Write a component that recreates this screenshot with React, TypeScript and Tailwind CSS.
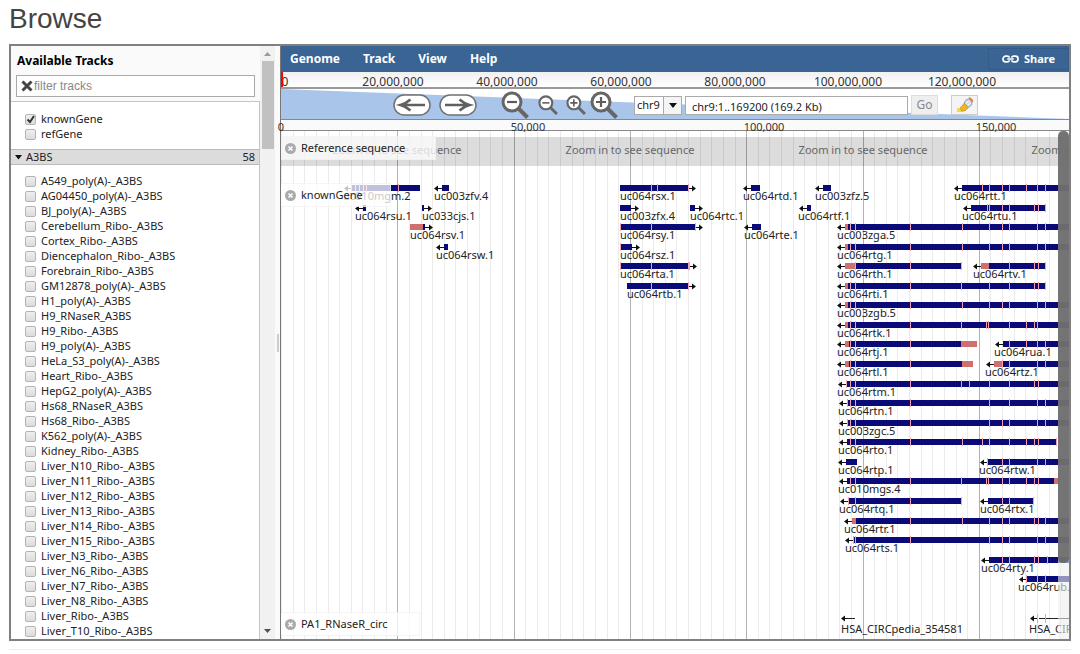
import React, { useState } from "react";

const tracks = [
  "A549_poly(A)-_A3BS", "AG04450_poly(A)-_A3BS", "BJ_poly(A)-_A3BS", "Cerebellum_Ribo-_A3BS",
  "Cortex_Ribo-_A3BS", "Diencephalon_Ribo-_A3BS", "Forebrain_Ribo-_A3BS", "GM12878_poly(A)-_A3BS",
  "H1_poly(A)-_A3BS", "H9_RNaseR_A3BS", "H9_Ribo-_A3BS", "H9_poly(A)-_A3BS", "HeLa_S3_poly(A)-_A3BS",
  "Heart_Ribo-_A3BS", "HepG2_poly(A)-_A3BS", "Hs68_RNaseR_A3BS", "Hs68_Ribo-_A3BS", "K562_poly(A)-_A3BS",
  "Kidney_Ribo-_A3BS", "Liver_N10_Ribo-_A3BS", "Liver_N11_Ribo-_A3BS", "Liver_N12_Ribo-_A3BS",
  "Liver_N13_Ribo-_A3BS", "Liver_N14_Ribo-_A3BS", "Liver_N15_Ribo-_A3BS", "Liver_N3_Ribo-_A3BS",
  "Liver_N6_Ribo-_A3BS", "Liver_N7_Ribo-_A3BS", "Liver_N8_Ribo-_A3BS", "Liver_Ribo-_A3BS",
  "Liver_T10_Ribo-_A3BS", "Liver_T11_Ribo-_A3BS",
];

type Gene = {
  row: number;
  name: string;
  x: number;
  from: number;
  to: number;
  dir: "l" | "r";
  marks?: number[];
  utr?: [number, number][];
};

// Horizontal positions are pixels from the left edge of the track view.
const genes: Gene[] = [
  { row: 0, name: "uc010mgm.2", x: 61, from: 70, to: 138, dir: "l", marks: [69, 73, 77, 81, 84, 116] },
  { row: 0, name: "uc003zfv.4", x: 152, from: 160, to: 167, dir: "l" },
  { row: 1, name: "uc064rsu.1", x: 73, from: 81, to: 84, dir: "l" },
  { row: 1, name: "uc033cjs.1", x: 140, from: 140, to: 142, dir: "r" },
  { row: 2, name: "uc064rsv.1", x: 128, from: 128, to: 143, dir: "r", utr: [[128, 141]] },
  { row: 3, name: "uc064rsw.1", x: 154, from: 162, to: 166, dir: "l" },
  { row: 0, name: "uc064rsx.1", x: 338, from: 338, to: 406, dir: "r", marks: [369, 375, 406] },
  { row: 1, name: "uc003zfx.4", x: 338, from: 338, to: 349, dir: "r" },
  { row: 1, name: "uc064rtc.1", x: 408, from: 408, to: 413, dir: "r" },
  { row: 2, name: "uc064rsy.1", x: 338, from: 338, to: 413, dir: "r", marks: [338, 369, 413] },
  { row: 3, name: "uc064rsz.1", x: 338, from: 338, to: 350, dir: "r", marks: [338] },
  { row: 4, name: "uc064rta.1", x: 338, from: 339, to: 407, dir: "r", marks: [338, 369, 406, 407] },
  { row: 5, name: "uc064rtb.1", x: 345, from: 345, to: 406, dir: "r", marks: [369, 406] },
  { row: 0, name: "uc064rtd.1", x: 461, from: 469, to: 478, dir: "l" },
  { row: 2, name: "uc064rte.1", x: 462, from: 470, to: 479, dir: "l" },
  { row: 0, name: "uc003zfz.5", x: 533, from: 541, to: 549, dir: "l" },
  { row: 1, name: "uc064rtf.1", x: 516, from: 525, to: 529, dir: "l" },
  { row: 0, name: "uc064rtt.1", x: 672, from: 680, to: 788, dir: "l", marks: [700, 707, 720, 727, 744, 755, 763] },
  { row: 1, name: "uc064rtu.1", x: 680, from: 689, to: 763, dir: "l", marks: [705, 707, 720, 727, 752, 756, 763] },
  { row: 2, name: "uc003zga.5", x: 555, from: 563, to: 788, dir: "l", marks: [568, 573, 628, 680, 707, 720, 727, 755, 763], utr: [[563, 566]] },
  { row: 3, name: "uc064rtg.1", x: 555, from: 563, to: 788, dir: "l", marks: [568, 573, 628, 680, 707, 720, 727, 755, 763], utr: [[563, 566]] },
  { row: 4, name: "uc064rth.1", x: 555, from: 563, to: 679, dir: "l", marks: [573, 628, 679], utr: [[563, 574]] },
  { row: 4, name: "uc064rtv.1", x: 691, from: 699, to: 763, dir: "l", marks: [727, 752, 756, 763], utr: [[699, 707]] },
  { row: 5, name: "uc064rti.1", x: 555, from: 563, to: 763, dir: "l", marks: [568, 573, 628, 679, 707, 727, 752, 756, 763], utr: [[563, 566]] },
  { row: 6, name: "uc003zgb.5", x: 555, from: 563, to: 788, dir: "l", marks: [568, 573, 628, 680, 707, 720, 727, 755, 763], utr: [[563, 566]] },
  { row: 7, name: "uc064rtk.1", x: 555, from: 563, to: 788, dir: "l", marks: [568, 573, 628, 679, 704, 706, 727, 744, 752, 755], utr: [[563, 566]] },
  { row: 8, name: "uc064rtj.1", x: 555, from: 563, to: 695, dir: "l", marks: [568, 573, 628], utr: [[563, 567], [679, 695]] },
  { row: 8, name: "uc064rua.1", x: 712, from: 721, to: 788, dir: "l", marks: [727, 744, 755, 763] },
  { row: 9, name: "uc064rtl.1", x: 555, from: 563, to: 691, dir: "l", marks: [568, 573, 628], utr: [[563, 567], [680, 691]] },
  { row: 9, name: "uc064rtz.1", x: 703, from: 712, to: 788, dir: "l", marks: [720, 727, 755, 763], utr: [[712, 720]] },
  { row: 10, name: "uc064rtm.1", x: 555, from: 564, to: 788, dir: "l", marks: [564, 568, 573, 628, 679, 687, 707, 727, 752, 756] },
  { row: 11, name: "uc064rtn.1", x: 556, from: 565, to: 788, dir: "l", marks: [565, 568, 573, 628, 707, 727, 755, 763] },
  { row: 12, name: "uc003zgc.5", x: 556, from: 565, to: 788, dir: "l", marks: [565, 568, 573, 628, 707, 720, 727, 755, 763] },
  { row: 13, name: "uc064rto.1", x: 556, from: 565, to: 774, dir: "l", marks: [568, 573, 628, 680, 700, 707, 727, 744, 752, 756, 774] },
  { row: 14, name: "uc064rtp.1", x: 556, from: 564, to: 575, dir: "l" },
  { row: 14, name: "uc064rtw.1", x: 697, from: 706, to: 788, dir: "l", marks: [705, 720, 727, 755, 763] },
  { row: 15, name: "uc010mgs.4", x: 556, from: 565, to: 777, dir: "l", marks: [568, 573, 628, 679, 704, 706, 720, 727, 744, 752, 756], utr: [[772, 777]] },
  { row: 16, name: "uc064rtq.1", x: 557, from: 566, to: 679, dir: "l", marks: [566, 573, 628, 679] },
  { row: 16, name: "uc064rtx.1", x: 698, from: 706, to: 751, dir: "l", marks: [720, 727, 751] },
  { row: 17, name: "uc064rtr.1", x: 562, from: 570, to: 788, dir: "l", marks: [628, 680, 707, 720, 727, 752, 756, 763], utr: [[570, 574]] },
  { row: 18, name: "uc064rts.1", x: 563, from: 571, to: 788, dir: "l", marks: [571, 573, 628, 707, 720, 727, 755, 763] },
  { row: 19, name: "uc064rty.1", x: 699, from: 707, to: 788, dir: "l", marks: [720, 727, 752, 756, 765] },
  { row: 20, name: "uc064rub.1", x: 736, from: 745, to: 788, dir: "l", marks: [744, 755, 763] },
];

function Arrow({ x, y, dir }: { x: number; y: number; dir: "l" | "r" }) {
  const s = dir === "l" ? -1 : 1;
  return (
    <g>
      <path d={`M${x} ${y}h${7 * s}`} stroke="#111" strokeWidth="1" />
      <path d={`M${x + 8 * s} ${y}l${-4 * s} -3v6z`} fill="#111" />
    </g>
  );
}

function GeneGlyph({ g }: { g: Gene }) {
  const y = Math.round(g.row * 19.56) + 53;
  return (
    <g>
      <Arrow x={g.dir === "l" ? g.from : g.to} y={y + 3.5} dir={g.dir} />
      <rect x={g.from} y={y} width={g.to - g.from} height="6" fill="#0a0a78" />
      {g.utr?.map(([a, b]) => (
        <rect key={a} x={a} y={y} width={b - a} height="6" fill="#cf6f70" />
      ))}
      {g.marks?.map((m) => (
        <rect key={m} x={m} y={y - 1} width="1" height="8" fill="#f3a0b0" />
      ))}
      <text x={g.x} y={y + 15} className="text-[11px]" fill="#222">{g.name}</text>
    </g>
  );
}

function TrackCanvas() {
  const lines = Array.from({ length: 68 }, (_, i) => i);
  return (
    <svg className="block h-full w-full" role="img" aria-label="Gene tracks">
      <rect x="0" y="6" width="100%" height="29" fill="#dcdcdc" />
      <g fill="#000">
        {lines.map((i) => (
          <rect key={i} x={Math.round(i * 11.63)} y="0" width="1" height="100%" fillOpacity={i % 10 === 0 && i ? 0.3 : 0.08} />
        ))}
      </g>
      <g transform="translate(1 1)">
        {[115, 348, 581, 814].map((x) => (
          <text key={x} x={x} y="22" textAnchor="middle" className="text-[11px]" fill="#666">Zoom in to see sequence</text>
        ))}
        {genes.map((g) => <GeneGlyph key={g.name} g={g} />)}
        <Arrow x={567} y={486.5} dir="l" />
        <path d="M566 486.500h7M757 486.500h30" stroke="#222" />
        <Arrow x={756} y={486.5} dir="l" />
        <path d="M755.500 482v9M763.500 482v9" stroke="#f3a0b0" />
        <text x="559" y="501" className="text-[11px]" fill="#222">HSA_CIRCpedia_354581</text>
        <text x="747" y="501" className="text-[11px]" fill="#222">HSA_CIRCpedia_354582</text>
      </g>
    </svg>
  );
}

function Lens({ size, plus }: { size: number; plus?: boolean }) {
  return (
    <svg width={size} height={size} viewBox="0 0 28 28" aria-hidden="true">
      <path d="M17 17l9.500 9.500" stroke="#666" strokeWidth="4" />
      <circle cx="11" cy="11" r="9" fill="#fff" stroke="#666" strokeWidth="3" />
      <path d={plus ? "M6 11h10M11 6v10" : "M6 11h10"} stroke="#5c5c5c" strokeWidth="2.200" />
    </svg>
  );
}

function PanIcon({ right }: { right?: boolean }) {
  return (
    <svg width="38" height="22" viewBox="0 0 38 22" aria-hidden="true">
      <rect x="1" y="1" width="36" height="20" rx="10" fill="#fff" stroke="#707070" strokeWidth="1.500" />
      <path d={right ? "M6 11h24M20.500 5.500q4.500 4 10 5.500-5.500 1.500-10 5.500" : "M32 11H8M17.500 5.500q-4.500 4-10 5.500 5.500 1.500 10 5.500"} fill="none" stroke="#606060" strokeWidth="2.600" />
    </svg>
  );
}

function TrackLabel({ children, className }: { children: string; className: string }) {
  return (
    <div className={`absolute left-0 flex h-6 items-center gap-[5px] border-y border-r border-[#eee]/60 bg-white/75 pl-1 text-[11px] text-[#222] ${className}`}>
      <button aria-label={`Remove ${children}`}>
        <svg width="11" height="11" viewBox="0 0 11 11" className="block">
          <circle cx="5.500" cy="5.500" r="5.500" fill="#aaa" />
          <path d="M3.500 3.500l4 4M7.500 3.500l-4 4" stroke="#fff" strokeWidth="1.500" />
        </svg>
      </button>
      <span>{children}</span>
    </div>
  );
}

function TrackCheck({ name, initial }: { name: string; initial?: boolean }) {
  const [on, setOn] = useState(!!initial);
  return (
    <label className="relative flex h-[15px] items-center gap-[5px] pl-[14px]">
      <input
        type="checkbox"
        checked={on}
        onChange={() => setOn(!on)}
        className="peer h-[11px] w-[11px] appearance-none rounded-[2px] border border-[#b4b4b4] bg-linear-to-b from-[#efefef] to-[#dcdcdc]"
      />
      <svg className="pointer-events-none absolute hidden h-[11px] w-[11px] peer-checked:block" viewBox="0 0 11 11" aria-hidden="true">
        <path d="M2.500 5.500l2.500 2.500 4-6" fill="none" stroke="#333" strokeWidth="2" />
      </svg>
      <span>{name}</span>
    </label>
  );
}

function Selector() {
  return (
    <aside className="flex w-[264px] shrink-0 bg-[#fafafa]">
      <div className="flex min-w-0 flex-1 flex-col">
        <h2 className="px-[6px] pt-[6px] text-[12px] leading-[18px] font-bold text-black">Available Tracks</h2>
        <div className="mx-[5px] mt-[5px] mb-[4px] flex h-[22px] items-center border border-[#aaa] bg-white pl-[4px]">
          <svg width="12" height="12" viewBox="0 0 12 12" aria-hidden="true"><path d="M1.500 1.500l9 9M10.500 1.500l-9 9" stroke="#444" strokeWidth="3" /></svg>
          <input aria-label="filter tracks" placeholder="filter tracks" className="ml-[1px] min-w-0 flex-1 font-['Liberation_Sans'] text-[12px] outline-none placeholder:text-[#888]" />
        </div>
        <div className="min-h-0 flex-1 overflow-hidden border-t border-r border-[#c4c4c4] bg-white text-[11px] text-[#222]">
          <div className="pt-[10px] pb-[7px]">
            <TrackCheck name="knownGene" initial />
            <TrackCheck name="refGene" />
          </div>
          <button className="flex h-4 w-full items-center border-t border-b border-[#bbb] bg-[#dcdcdc] pr-[4px] pl-[4px]">
            <svg width="7" height="5" viewBox="0 0 7 5" aria-hidden="true"><path d="M0 0h7L3.500 4.500z" fill="#111" /></svg>
            <span className="ml-[4px] flex-1 text-left">A3BS</span>
            <span>58</span>
          </button>
          <div className="pt-[9px]">
            {tracks.map((t) => <TrackCheck key={t} name={t} />)}
          </div>
        </div>
      </div>
      <div className="flex w-[15px] flex-col items-center bg-[#f1f1f1]">
        <svg width="7" height="15" viewBox="0 0 7 15" aria-hidden="true"><path d="M0 10h7L3.500 6z" fill="#999" /></svg>
        <div className="h-[88px] w-[12px] bg-[#c1c1c1]" />
        <svg width="7" height="15" viewBox="0 0 7 15" className="mt-auto" aria-hidden="true"><path d="M0 5h7L3.500 9z" fill="#505050" /></svg>
      </div>
    </aside>
  );
}

function Ruler({ labels }: { labels: [string, string][] }) {
  return (
    <>
      {labels.map(([t, pos]) => (
        <span key={t} className={`absolute top-px -translate-x-1/2 ${pos}`}>{t}</span>
      ))}
    </>
  );
}

export default function App() {
  return (
    <div className="bg-white px-[9px] pt-[2px] font-['Noto_Sans',sans-serif]">
      <h1 className="font-['Liberation_Sans',sans-serif] text-[28px] leading-[34px] text-[#444]">Browse</h1>
      <div className="mt-2 flex h-[597px] overflow-hidden border-2 border-[#808080]">
        <Selector />
        <div className="flex w-[5px] shrink-0 items-center justify-center bg-[#fafafa]">
          <div className="h-[18px] w-[2px] bg-[#ccc]" />
        </div>
        <main className="flex min-w-0 flex-1 flex-col border-l border-[#777]">
          <nav className="flex h-[26px] shrink-0 items-center gap-[23px] bg-[#396494] pl-[9px] text-xs font-bold text-white">
            <button>Genome</button>
            <button>Track</button>
            <button>View</button>
            <button>Help</button>
            <button className="ml-auto flex h-[22px] items-center gap-[5px] border border-[#345c88] px-[13px] text-[11px]">
              <svg width="17" height="8" viewBox="0 0 18 8" fill="none" stroke="#fff" strokeWidth="1.800" aria-hidden="true">
                <path d="M8 2.500C7.500 1.500 6.500 1 5.500 1H4a3 3 0 000 6h1.500C6.500 7 7.500 6.500 8 5.500M10 2.500C10.500 1.500 11.500 1 12.500 1H14a3 3 0 010 6h-1.500c-1 0-2-.5-2.500-1.500M5.500 4h7" />
              </svg>
              Share
            </button>
          </nav>
          <div className="relative h-[17px] shrink-0 overflow-hidden border-b-2 border-[#999] bg-linear-to-b from-[#f0f0f0] to-white text-xs leading-[18px] text-[#333]">
            <Ruler labels={[["0", "left-[4px]"], ["20,000,000", "left-[112px]"], ["40,000,000", "left-[226px]"], ["60,000,000", "left-[340px]"], ["80,000,000", "left-[454px]"], ["100,000,000", "left-[567px]"], ["120,000,000", "left-[681px]"]]} />
            <div className="absolute top-0 left-0 h-[17px] w-[2px] bg-[#f00]" />
          </div>
          <div className="relative h-[30px] shrink-0">
            <svg className="absolute inset-0 h-full w-full" viewBox="0 0 788 30" preserveAspectRatio="none" aria-hidden="true">
              <path d="M0 0L788 30H0z" fill="#a9c5ea" />
            </svg>
            <div className="relative flex h-full items-center pt-[2px] pl-[112px]">
              <button aria-label="Pan left"><PanIcon /></button>
              <button aria-label="Pan right" className="ml-[8px]"><PanIcon right /></button>
              <button aria-label="Zoom out more" className="ml-[24px]"><Lens size={28} /></button>
              <button aria-label="Zoom out" className="ml-[9px]"><Lens size={20} /></button>
              <button aria-label="Zoom in" className="ml-[8px]"><Lens size={20} plus /></button>
              <button aria-label="Zoom in more" className="ml-[4px]"><Lens size={28} plus /></button>
              <div className="relative ml-[16px] flex h-[19px] items-center border border-[#aaa] bg-white">
                <select aria-label="Sequence" className="h-[17px] w-[46px] appearance-none pl-[2px] text-[11px] text-[#222] outline-none">
                  <option>chr9</option>
                </select>
                <span className="pointer-events-none absolute right-0 flex h-full w-[18px] items-center justify-center border-l border-[#aaa] bg-[#f4f4f4]">
                  <svg width="8" height="5" viewBox="0 0 8 5" aria-hidden="true"><path d="M0 0h8L4 5z" fill="#111" /></svg>
                </span>
              </div>
              <input aria-label="Location" defaultValue="chr9:1..169200 (169.2 Kb)" className="ml-[3px] h-[19px] w-[223px] border border-[#aaa] bg-white px-[6px] pt-[2px] text-[11px] text-[#222] outline-none" />
              <button className="ml-[3px] h-[20px] w-[27px] border border-[#ddd] bg-[#efefef] text-xs leading-[18px] text-[#888]">Go</button>
              <button aria-label="Highlight a region" className="ml-[13px] flex h-[20px] w-[27px] items-center justify-center border border-[#ccc] bg-[#f4f4f4]">
                <svg width="16" height="16" viewBox="0 0 16 16" aria-hidden="true">
                  <path d="M0 11.500l5-1.500 3 4-3 1H0z" fill="#f2dc3c" />
                  <path d="M3.500 10.500L8 5.500l4 4.500-3.500 3.500-4 .5z" fill="#f0b62a" stroke="#c99320" strokeWidth=".8" />
                  <path d="M7 6l2.500-3.500 3-.5 2.500 3-.5 3-3 2.500z" fill="#cdd9e2" stroke="#8799a6" strokeWidth=".9" />
                  <path d="M9 6l3-2M10.500 8l3-2" stroke="#fff" />
                  <path d="M11 .5h2.500L16 3v2.500z" fill="#e8744a" />
                </svg>
              </button>
            </div>
          </div>
          <div className="relative h-[12px] shrink-0 border-t border-b border-[#888] bg-[#fafafa] text-[11px] leading-[12px] text-[#333]">
            <Ruler labels={[["0", "left-0"], ["50,000", "left-[247px]"], ["100,000", "left-[483px]"], ["150,000", "left-[715px]"]]} />
          </div>
          <div className="relative min-h-0 flex-1">
            <TrackCanvas />
            <TrackLabel className="top-[5px] w-[155px]">Reference sequence</TrackLabel>
            <TrackLabel className="top-[52px] w-[110px]">knownGene</TrackLabel>
            <TrackLabel className="top-[481px] w-[139px]">PA1_RNaseR_circ</TrackLabel>
            <div className="absolute inset-y-0 right-0 w-[11px] bg-[#eee]/60">
              <div className="h-[432px] rounded-[5px] bg-[#666]/90" />
            </div>
          </div>
        </main>
      </div>
      <hr className="mt-[8px] border-[#eee]" />
    </div>
  );
}
